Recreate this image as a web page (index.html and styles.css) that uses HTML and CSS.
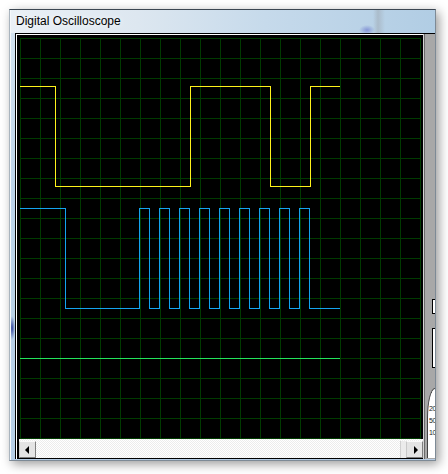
FILE: index.html
```html
<!DOCTYPE html>
<html>
<head>
<meta charset="utf-8">
<link rel="stylesheet" href="styles.css">
</head>
<body>
<div class="window">
  <div class="titlebar"><span class="title">Digital Oscilloscope</span></div>
  <div class="client">
    <div class="scope">
      <div class="bevel">
        <div class="view">
          <div class="screen">
            <svg class="traces" width="401" height="401" viewBox="0 0 401 401">
              <path class="tr-yellow" d="M0 48.5H35.5V148.5H170.5V48.5H250.5V148.5H290.5V48.5H320"/>
              <path class="tr-blue" d="M0 170.5H45.5V270.5H119.5V170.5H129.5V270.5H139.5V170.5H149.5V270.5H159.5V170.5H169.5V270.5H179.5V170.5H189.5V270.5H199.5V170.5H209.5V270.5H219.5V170.5H229.5V270.5H239.5V170.5H249.5V270.5H259.5V170.5H269.5V270.5H279.5V170.5H289.5V270.5H320"/>
              <path class="tr-green" d="M0 320.5H320"/>
            </svg>
          </div>
          <div class="hscroll">
            <div class="sbtn"><i class="arrow-left"></i></div>
            <div class="track"></div>
            <div class="thumb"></div>
            <div class="sbtn"><i class="arrow-right"></i></div>
          </div>
        </div>
      </div>
    </div>
    <div class="side">
      <div class="knob k1"></div>
      <div class="knob k2"></div>
      <div class="dial"><span>20</span><span>50</span><span>10</span></div>
    </div>
  </div>
</div>
</body>
</html>
```
FILE: styles.css
```css
html, body {
  margin: 0;
  padding: 0;
}
body {
  width: 448px;
  height: 474px;
  overflow: hidden;
  background: #fff;
  font-family: "Liberation Sans", Arial, sans-serif;
}
.window {
  margin: 9px 0 0 9px;
  width: 425px;
  height: 450px;
  border: 1px solid;
  border-color: #3c4752 #7d8a96 #7d8a96 #a9b4be;
  background:
    radial-gradient(ellipse 3px 12px at 2px 318px, #34449c, rgba(52,68,156,0)),
    linear-gradient(to bottom, #d6e4f1, #bcd3e9 40%, #b6cee6);
  box-shadow: inset 1px 0 0 #f5f8fb, 3px 3px 10px rgba(0,0,0,.4);
  display: flex;
  flex-direction: column;
}
.titlebar {
  height: 23px;
  line-height: 23px;
  padding-left: 6px;
  font-size: 12px;
  color: #000;
  background:
    radial-gradient(ellipse 8px 5px at 357px 20px, rgba(120,135,210,.8), rgba(120,135,210,0)),
    linear-gradient(to right, rgba(160,170,180,0) 363px, rgba(160,170,180,.55) 368px, rgba(160,170,180,0) 375px),
    linear-gradient(to right, #eaf0f6 0%, #dde7f0 30%, #c6daeb 60%, #b1cde4 100%);
  box-shadow: inset 1px 0 0 #f5f8fb;
}
.title {
  text-shadow: 0 0 6px rgba(255,255,255,.95);
}
.client {
  display: flex;
  margin-left: 5px;
  height: 425px;
  border-top: 1px solid #000;
}
.scope {
  width: 407px;
  border-left: 1px solid #000;
}
.bevel {
  border-left: 1px solid #fff;
  border-top: 1px solid #fff;
}
.view {
  border-left: 1px solid #000;
  border-top: 1px solid #000;
  background: #000;
  padding: 2px 2px 0 2px;
}
.screen {
  width: 401px;
  height: 401px;
  background-color: #000;
  background-image:
    linear-gradient(to right, #003a00 1px, transparent 1px),
    linear-gradient(to bottom, #003a00 1px, transparent 1px);
  background-size: 20px 20px;
}
.traces {
  display: block;
  fill: none;
  stroke-width: 1;
  shape-rendering: crispEdges;
}
.tr-yellow { stroke: #fff21a; }
.tr-blue { stroke: #14a4f0; }
.tr-green { stroke: #22e35a; }
.hscroll {
  display: flex;
  height: 20px;
  box-sizing: border-box;
  margin: 0 -2px 0 -1px;
  padding-top: 2px;
  border-bottom: 1px solid #000;
  background: repeating-conic-gradient(#ffffff 0 25%, #ececec 0 50%) 0 0 / 2px 2px;
}
.sbtn {
  width: 17px;
  height: 17px;
  box-sizing: border-box;
  background: #e4e4e4;
  border: 1px solid;
  border-color: #fafafa #7e7e7e #7e7e7e #c8c8c8;
  display: flex;
  align-items: center;
  justify-content: center;
}
.arrow-left {
  width: 0;
  height: 0;
  border-top: 4px solid transparent;
  border-bottom: 4px solid transparent;
  border-right: 4px solid #000;
  margin-right: 2px;
}
.arrow-right {
  width: 0;
  height: 0;
  border-top: 4px solid transparent;
  border-bottom: 4px solid transparent;
  border-left: 4px solid #000;
  margin-left: 2px;
}
.track {
  flex: 1;
}
.thumb {
  width: 6px;
  background: #ebebeb;
  border-left: 1px solid #d0d0d0;
  box-sizing: border-box;
}
.side {
  width: 12px;
  box-sizing: border-box;
  background: #a8a8a8;
  border-left: 1px solid #d4d4d4;
  box-shadow: inset 1px 0 0 #6a6a6a;
  overflow: hidden;
}
.knob {
  margin-left: 8px;
  width: 8px;
  background: #fff;
  border: 1px solid #000;
  box-sizing: border-box;
}
.k1 {
  margin-top: 265px;
  height: 15px;
}
.k2 {
  margin-top: 14px;
  height: 40px;
}
.dial {
  margin-top: 20px;
  margin-left: 3px;
  width: 8px;
  height: 70px;
  box-sizing: border-box;
  background: #fff;
  border-left: 1px solid #444;
  border-top: 1px solid #444;
  border-top-left-radius: 8px 30px;
  padding: 14px 0 0 1px;
  font-size: 7px;
  line-height: 12px;
  letter-spacing: -0.5px;
  color: #222;
}
.dial span {
  display: block;
  white-space: nowrap;
}
```
